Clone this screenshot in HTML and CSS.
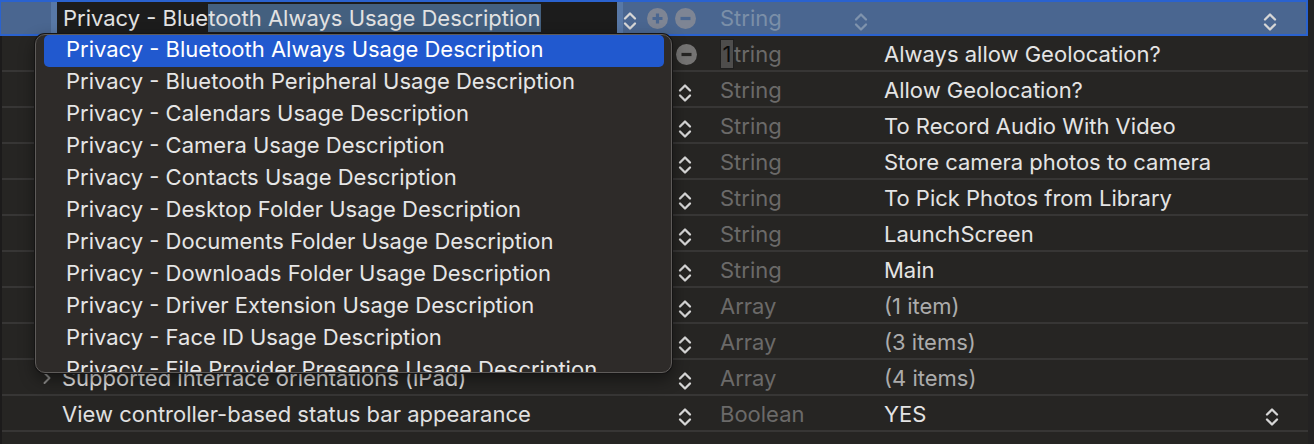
FILE: index.html
```html
<!DOCTYPE html>
<html>
<head>
<meta charset="utf-8">
<link rel="stylesheet" href="styles.css">
</head>
<body>
<div class="window">
  <div class="table">
    <div class="row row-selected">
      <div class="cell key">
        <div class="field"><span class="field-text">Privacy - Blue<span class="selection">tooth Always Usage Description</span></span></div>
        <svg class="stepper" viewBox="0 0 14 20"><path d="M2 7.5 L7 2.5 L12 7.5 M2 12.5 L7 17.5 L12 12.5"/></svg>
        <span class="circle-btn plus"><svg viewBox="0 0 21 21"><circle cx="10.5" cy="10.5" r="10.5" class="disc"/><path d="M5.5 10.5 H15.5 M10.5 5.5 V15.5" class="sym"/></svg></span>
        <span class="circle-btn minus"><svg viewBox="0 0 21 21"><circle cx="10.5" cy="10.5" r="10.5" class="disc"/><path d="M5.5 10.5 H15.5" class="sym"/></svg></span>
      </div>
      <div class="cell type">String<svg class="stepper muted" viewBox="0 0 14 20"><path d="M2 7.5 L7 2.5 L12 7.5 M2 12.5 L7 17.5 L12 12.5"/></svg></div>
      <div class="cell value"><svg class="stepper" viewBox="0 0 14 20"><path d="M2 7.5 L7 2.5 L12 7.5 M2 12.5 L7 17.5 L12 12.5"/></svg></div>
    </div>

    <div class="row">
      <div class="cell key"><span class="circle-btn minus row-minus"><svg viewBox="0 0 21 21"><circle cx="10.5" cy="10.5" r="10.5" class="disc"/><path d="M5.5 10.5 H15.5" class="sym"/></svg></span></div>
      <div class="cell type"><span class="typeahead">1</span>tring</div>
      <div class="cell value">Always allow Geolocation?</div>
    </div>

    <div class="row">
      <div class="cell key"><svg class="stepper" viewBox="0 0 14 20"><path d="M2 7.5 L7 2.5 L12 7.5 M2 12.5 L7 17.5 L12 12.5"/></svg></div>
      <div class="cell type">String</div>
      <div class="cell value">Allow Geolocation?</div>
    </div>

    <div class="row">
      <div class="cell key"><svg class="stepper" viewBox="0 0 14 20"><path d="M2 7.5 L7 2.5 L12 7.5 M2 12.5 L7 17.5 L12 12.5"/></svg></div>
      <div class="cell type">String</div>
      <div class="cell value">To Record Audio With Video</div>
    </div>

    <div class="row">
      <div class="cell key"><svg class="stepper" viewBox="0 0 14 20"><path d="M2 7.5 L7 2.5 L12 7.5 M2 12.5 L7 17.5 L12 12.5"/></svg></div>
      <div class="cell type">String</div>
      <div class="cell value">Store camera photos to camera</div>
    </div>

    <div class="row">
      <div class="cell key"><svg class="stepper" viewBox="0 0 14 20"><path d="M2 7.5 L7 2.5 L12 7.5 M2 12.5 L7 17.5 L12 12.5"/></svg></div>
      <div class="cell type">String</div>
      <div class="cell value">To Pick Photos from Library</div>
    </div>

    <div class="row">
      <div class="cell key"><svg class="stepper" viewBox="0 0 14 20"><path d="M2 7.5 L7 2.5 L12 7.5 M2 12.5 L7 17.5 L12 12.5"/></svg></div>
      <div class="cell type">String</div>
      <div class="cell value">LaunchScreen</div>
    </div>

    <div class="row">
      <div class="cell key"><svg class="stepper" viewBox="0 0 14 20"><path d="M2 7.5 L7 2.5 L12 7.5 M2 12.5 L7 17.5 L12 12.5"/></svg></div>
      <div class="cell type">String</div>
      <div class="cell value">Main</div>
    </div>

    <div class="row">
      <div class="cell key"><svg class="stepper" viewBox="0 0 14 20"><path d="M2 7.5 L7 2.5 L12 7.5 M2 12.5 L7 17.5 L12 12.5"/></svg></div>
      <div class="cell type">Array</div>
      <div class="cell value count">(1 item)</div>
    </div>

    <div class="row">
      <div class="cell key"><svg class="stepper" viewBox="0 0 14 20"><path d="M2 7.5 L7 2.5 L12 7.5 M2 12.5 L7 17.5 L12 12.5"/></svg></div>
      <div class="cell type">Array</div>
      <div class="cell value count">(3 items)</div>
    </div>

    <div class="row">
      <div class="cell key"><svg class="disclosure" viewBox="0 0 10 14"><path d="M2.5 2 L7.5 7 L2.5 12"/></svg><span class="key-text">Supported interface orientations (iPad)</span><svg class="stepper" viewBox="0 0 14 20"><path d="M2 7.5 L7 2.5 L12 7.5 M2 12.5 L7 17.5 L12 12.5"/></svg></div>
      <div class="cell type">Array</div>
      <div class="cell value count">(4 items)</div>
    </div>

    <div class="row">
      <div class="cell key"><span class="key-text">View controller-based status bar appearance</span><svg class="stepper" viewBox="0 0 14 20"><path d="M2 7.5 L7 2.5 L12 7.5 M2 12.5 L7 17.5 L12 12.5"/></svg></div>
      <div class="cell type">Boolean</div>
      <div class="cell value">YES<svg class="stepper" viewBox="0 0 14 20"><path d="M2 7.5 L7 2.5 L12 7.5 M2 12.5 L7 17.5 L12 12.5"/></svg></div>
    </div>
  </div>

  <div class="popup">
    <div class="item active">Privacy - Bluetooth Always Usage Description</div>
    <div class="item">Privacy - Bluetooth Peripheral Usage Description</div>
    <div class="item">Privacy - Calendars Usage Description</div>
    <div class="item">Privacy - Camera Usage Description</div>
    <div class="item">Privacy - Contacts Usage Description</div>
    <div class="item">Privacy - Desktop Folder Usage Description</div>
    <div class="item">Privacy - Documents Folder Usage Description</div>
    <div class="item">Privacy - Downloads Folder Usage Description</div>
    <div class="item">Privacy - Driver Extension Usage Description</div>
    <div class="item">Privacy - Face ID Usage Description</div>
    <div class="item">Privacy - File Provider Presence Usage Description</div>
  </div>
</div>
</body>
</html>
```

FILE: styles.css
```css
* { box-sizing: border-box; }

html, body {
  margin: 0;
  padding: 0;
  width: 1314px;
  height: 444px;
  overflow: hidden;
  background: #232222;
  font-family: "Inter", "Noto Sans", sans-serif;
  font-size: 22px;
  color: #dedede;
}

.window {
  position: relative;
  width: 1314px;
  height: 444px;
}

.table {
  width: 1308px;
  height: 444px;
  background: #262523;
  border-left: 2px solid #1c1b1b;
}

.row {
  display: flex;
  height: 36px;
  border-bottom: 2px solid #373635;
  white-space: nowrap;
}

.cell {
  display: flex;
  align-items: center;
  height: 100%;
  padding-top: 2px;
}

.key {
  width: 704px;
  padding-left: 60px;
  padding-right: 14px;
}

.key-text {
  color: #e0e0e0;
}

.type {
  width: 164px;
  padding-left: 14px;
  color: #6b6a69;
}

.value {
  flex: 1;
  padding-left: 14px;
  padding-right: 29px;
  color: #e4e4e4;
}

.value.count {
  color: #acacac;
}

.stepper {
  width: 14px;
  height: 20px;
  margin-left: auto;
  margin-top: 5px;
  flex: none;
}

.stepper path {
  fill: none;
  stroke: #d6d6d6;
  stroke-width: 2.3;
  stroke-linecap: round;
  stroke-linejoin: round;
}

.stepper.muted path {
  stroke: #7f93ad;
}

.disclosure {
  width: 10px;
  height: 14px;
  margin-left: -20px;
  margin-right: 10px;
  flex: none;
}

.disclosure path {
  fill: none;
  stroke: #8a8988;
  stroke-width: 2;
  stroke-linecap: round;
  stroke-linejoin: round;
}

/* selected row */
.row-selected {
  width: 1308px;
  margin-left: -2px;
  border-bottom: none;
  background: #4a6690;
  box-shadow: inset 0 2px #2a62cf, inset 0 -2px #2a62cf, inset -2px 0 #2a62cf, inset 1px 0 #2a62cf;
}

.row-selected .cell {
  padding-top: 0;
}

.row-selected .key {
  width: 706px;
  padding-left: 0;
  padding-right: 10px;
}

.row-selected .type {
  padding-right: 2px;
  color: #7b8fa8;
}

.row-selected .value {
  padding-right: 31px;
}

.field {
  margin-left: 51px;
  width: 572px;
  height: 32px;
  background: #1c1c1c;
  border-left: 6px solid #5878a6;
  border-right: 6px solid #5878a6;
  display: flex;
  align-items: center;
  padding-left: 6px;
  overflow: hidden;
}

.field-text {
  color: #e2e2e2;
  display: inline-flex;
  align-items: center;
  height: 28px;
}

.selection {
  background: #44607f;
  height: 28px;
  display: inline-flex;
  align-items: center;
}

.row-selected .key .stepper {
  margin-left: 0;
  margin-top: 6px;
}

.row-selected .type .stepper,
.row-selected .value .stepper {
  margin-left: auto;
  margin-top: 7px;
}

.circle-btn {
  display: inline-flex;
  width: 21px;
  height: 21px;
  flex: none;
}

.circle-btn svg {
  width: 21px;
  height: 21px;
}

.circle-btn .sym {
  fill: none;
  stroke-width: 3.2;
  stroke-linecap: butt;
}

.row-selected .circle-btn .disc { fill: #7e8594; }
.row-selected .circle-btn .sym { stroke: #4a6690; }

.plus { margin-left: 10px; }
.minus { margin-left: 7px; }

.row-minus {
  margin-left: auto;
  margin-right: -5px;
}

.row-minus .disc { fill: #757473; }
.row-minus .sym { stroke: #262523; }

.typeahead {
  display: inline-flex;
  align-items: center;
  justify-content: center;
  width: 14px;
  height: 30px;
  background: #4e4d4c;
  border: 1px solid #1f1f1f;
  color: #0c0c0c;
}

/* popup menu overlay */
.popup {
  position: absolute;
  left: 35px;
  top: 34px;
  width: 637px;
  height: 339px;
  background: #2e2b29;
  border: 1px solid #5e5b59;
  border-radius: 10px;
  box-shadow: 0 0 0 1px #151414, 0 6px 16px rgba(0, 0, 0, 0.45);
  overflow: hidden;
  padding: 0 7px 0 8px;
}

.item {
  height: 32px;
  display: flex;
  align-items: center;
  padding-left: 22px;
  padding-bottom: 4px;
  color: #e6e6e6;
  white-space: nowrap;
  border-radius: 5px;
}

.item.active {
  background: #2159cf;
  color: #ffffff;
}
```
